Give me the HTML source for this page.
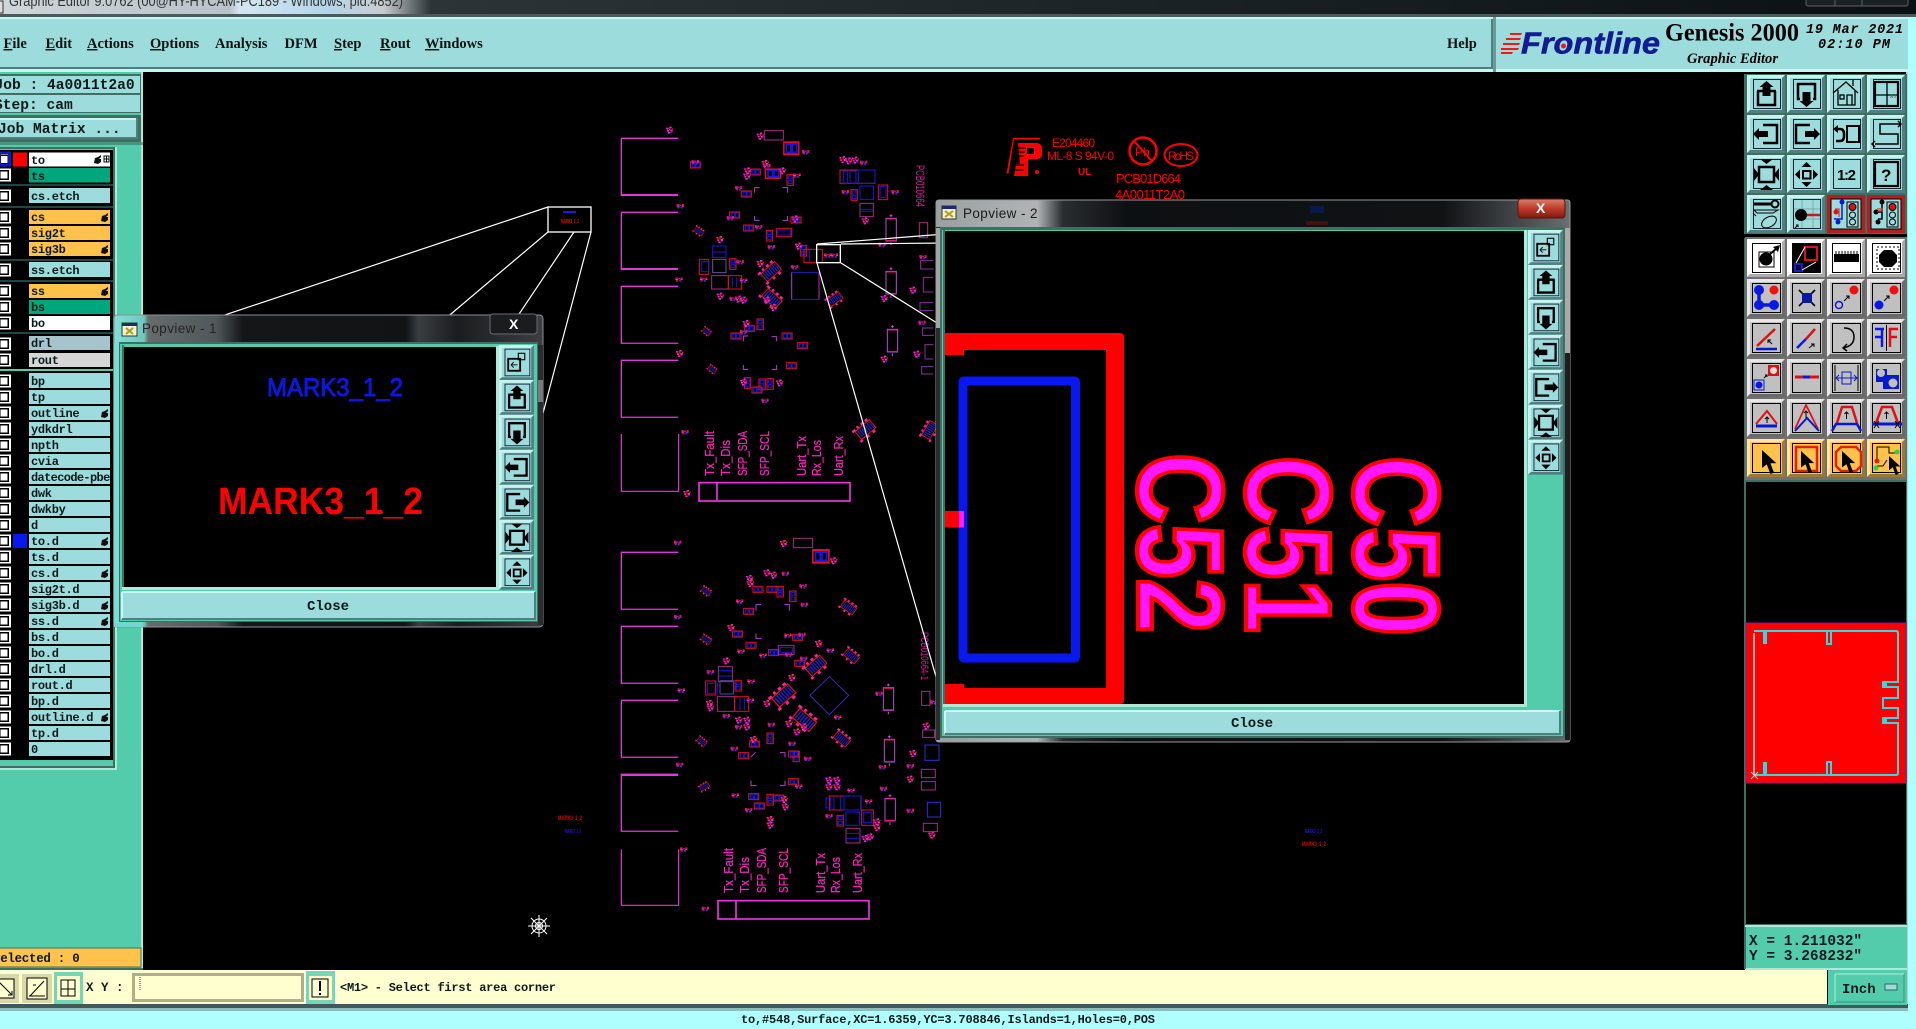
<!DOCTYPE html>
<html><head><meta charset="utf-8"><title>Graphic Editor</title>
<style>
html,body{margin:0;padding:0;background:#000;width:1916px;height:1029px;overflow:hidden}
svg{display:block;position:absolute;left:0;top:0}
text{white-space:pre}
.m{font:bold 14.5px "Liberation Serif",serif;fill:#0a1212}
.l{font:bold 12px "Liberation Mono",monospace;fill:#0a1a1a;letter-spacing:-.3px}
.j{font:bold 14.6px "Liberation Mono",monospace;fill:#0a1a1a}
.s{font:bold 12px "Liberation Mono",monospace;fill:#0a1a1a}
.t{font:13.5px "Liberation Sans",sans-serif;fill:#222;letter-spacing:.4px}
.c{font:bold 14px "Liberation Mono",monospace;fill:#0a1a1a;text-anchor:middle}
.p{font:13px "Liberation Sans",sans-serif;fill:#ff20c0;stroke:#ff20c0;stroke-width:.25}
.r{font:12px "Liberation Sans",sans-serif;fill:#f00}
</style></head><body>
<svg width="1916" height="1029" viewBox="0 0 1916 1029" xmlns="http://www.w3.org/2000/svg">
<defs>
<linearGradient id="gt" x1="0" x2="1" y1="0" y2="0">
<stop offset="0" stop-color="#cfd6da"/><stop offset=".12" stop-color="#b8c2c8"/><stop offset=".125" stop-color="#d5e6f2"/><stop offset=".17" stop-color="#b5d5ea"/><stop offset=".2" stop-color="#c8cdd0"/><stop offset=".225" stop-color="#2c3438"/><stop offset="1" stop-color="#0a1014"/>
</linearGradient>
<linearGradient id="g1" x1="114" x2="543" y1="0" y2="0" gradientUnits="userSpaceOnUse">
<stop offset="0" stop-color="#7fe0d8"/><stop offset=".07" stop-color="#70c8c0"/><stop offset=".08" stop-color="#666c6c"/><stop offset=".24" stop-color="#50575a"/><stop offset=".3" stop-color="#141618"/><stop offset=".68" stop-color="#111315"/><stop offset=".71" stop-color="#3a3e40"/><stop offset=".8" stop-color="#1a1c1e"/><stop offset="1" stop-color="#3c3e40"/>
</linearGradient>
<linearGradient id="g2" x1="936" x2="1570" y1="0" y2="0" gradientUnits="userSpaceOnUse">
<stop offset="0" stop-color="#9aa0a0"/><stop offset=".16" stop-color="#b0b4b4"/><stop offset=".2" stop-color="#2a2d2f"/><stop offset=".3" stop-color="#0d1012"/><stop offset=".8" stop-color="#101214"/><stop offset="1" stop-color="#6a6e70"/>
</linearGradient>
<linearGradient id="gr" x1="0" x2="0" y1="0" y2="1"><stop offset="0" stop-color="#d88070"/><stop offset=".5" stop-color="#c03a28"/><stop offset="1" stop-color="#7a1c10"/></linearGradient>

<g id="ck"><rect x="-3" y=".5" width="14" height="13" fill="#fff"/><rect x="-1" y="2" width="10" height="10" fill="#000"/><rect x=".5" y="3.500" width="7" height="7" fill="#fff"/></g>
<path id="hd" fill="#111" d="M0 8l1-5 3-1 3-2 0 2-2 2 2 0 0 3-3 2z"/>

<g id="bt"><rect width="38" height="38" fill="#9ddcdc"/><path d="M0 0h38l-3 3H3v32l-3 3z" fill="#c8f4f0"/><path d="M38 38H0l3-3h32V3l3-3z" fill="#4f8080"/><rect x="6.500" y="4.500" width="27" height="29" fill="none" stroke="#123" stroke-width="1"/></g>
<g id="bw"><rect width="38" height="38" fill="#fff"/><path d="M38 38H0l3-3h32V3l3-3z" fill="#aaa"/><rect x="5.500" y="4.500" width="28" height="29" fill="none" stroke="#000" stroke-width="1"/></g>
<g id="bg"><rect width="38" height="38" fill="#c0c0c0"/><path d="M0 0h38l-3 3H3v32l-3 3z" fill="#e8e8e8"/><path d="M38 38H0l3-3h32V3l3-3z" fill="#6a6a6a"/><rect x="5.500" y="4.500" width="28" height="29" fill="none" stroke="#000" stroke-width="1"/></g>
<g id="bo"><rect width="38" height="38" fill="#ffc34c"/><path d="M0 0h38l-3 3H3v32l-3 3z" fill="#ffe6a8"/><path d="M38 38H0l3-3h32V3l3-3z" fill="#9c7a30"/><rect x="5.500" y="4.500" width="28" height="29" fill="none" stroke="#000" stroke-width="1"/></g>
<g id="br"><rect width="38" height="38" fill="#b02020"/><rect x="4" y="4" width="30" height="30" fill="#9ddcdc" stroke="#000"/></g>

<g id="up"><path d="M11 16v14h17V16" fill="none" stroke="#000" stroke-width="2.500"/><path d="M10 16h6m7 0h6" stroke="#000" stroke-width="2.500"/><path d="M19.500 6l7 6h-3v9h-8v-9h-3z" fill="#000"/></g>
<g id="dn"><path d="M13 24H11V9h17v15h-2" fill="none" stroke="#000" stroke-width="2.500"/><path d="M19.500 32l7-6h-3v-9h-8v9h-3z" fill="#000"/></g>
<g id="lf"><path d="M16 10h14v18H16" fill="none" stroke="#000" stroke-width="2.500"/><path d="M6 19l6-6v3h9v6h-9v3z" fill="#000"/></g>
<g id="rg"><path d="M23 10H9v18h14" fill="none" stroke="#000" stroke-width="2.500"/><path d="M33 19l-6-6v3h-9v6h9v3z" fill="#000"/></g>
<g id="fi"><rect x="12" y="12" width="15" height="15" fill="none" stroke="#000" stroke-width="2.500"/><path d="M13 4h13l-6.500 5zM13 35h13l-6.500-5zM7 13v13l5-6.500zM32 13v13l-5-6.500z" fill="#000"/></g>
<g id="fo"><rect x="16" y="16" width="7.500" height="7.500" fill="none" stroke="#000" stroke-width="2"/><path d="M19.500 7l5 5h-10zM19.500 32l5-5h-10zM8 19.500l5-5v10zM31 19.500l-5-5v10z" fill="#000"/></g>
<g id="pp"><rect x="10" y="15" width="13" height="13" fill="none" stroke="#000" stroke-width="2"/><rect x="21" y="9" width="7" height="7" fill="none" stroke="#000" stroke-width="1.200"/><path d="M13 21.500h7M13 21.500l3-3M13 21.500l3 3" stroke="#000" fill="none"/></g>
<path id="ar" d="M0 0v15l4-3 3 8 3-1-3-8h5z" fill="#000"/>

<g id="c1"><rect x="1" y="1" width="30" height="18" fill="none" stroke="#e01020" stroke-width="3"/><rect x="6" y="4" width="9" height="12" fill="none" stroke="#1818e0" stroke-width="3"/><rect x="18" y="4" width="9" height="12" fill="none" stroke="#1818e0" stroke-width="3"/></g>
<g id="c2"><rect x="1" y="1" width="19" height="32" fill="none" stroke="#e01020" stroke-width="3"/><rect x="5" y="5" width="11" height="9" fill="none" stroke="#1818e0" stroke-width="3"/><rect x="5" y="19" width="11" height="9" fill="none" stroke="#1818e0" stroke-width="3"/></g>
<g id="s1"><path d="M0 3h8v4H0zM10 0h7v5h-7zM3 10h6v5H3zM13 9h7v6h-7zM6 16h7v5H6z" fill="#ff20b0"/><path d="M2 7h4v3H2zM9 5h4v5H9zM18 5h4v4h-4z" fill="#e01020"/><path d="M5 3h5v3H5zM14 15h5v4h-5z" fill="#2020e0"/></g>
<g id="s2"><path d="M0 0h6v5H0zM8 2h6v4H8zM16 0h6v5h-6zM2 8h6v5H2zM12 8h6v5h-6z" fill="#e01030"/><path d="M6 0h3v13H6zM14 6h4v8h-4z" fill="#2a20e0"/><path d="M0 5h8v3H0zM16 5h6v3h-6z" fill="#ff20e0"/></g>
<g id="d1"><rect x="0" y="0" width="62" height="34" fill="none" stroke="#e01020" stroke-width="3.500"/><path d="M8 4v26M16 4v26M24 4v26M32 4v26M40 4v26M48 4v26M56 4v26" stroke="#2020d0" stroke-width="4"/><path d="M-8-8h12v8H-8zM12-10h8v8h-8zM30-10h10v8H30zM48-10h10v8H48zM-8 34h10v8H-8zM20 36h9v8h-9zM44 36h10v8H44z" fill="#ff20a0"/></g>
<g id="vc"><rect x="0" y="0" width="31" height="68" fill="none" stroke="#b050d0" stroke-width="3"/><path d="M15 -12v8M11 -8h8M15 72v8" stroke="#e040e0" stroke-width="3"/><path d="M0 2h31M0 66h31" stroke="#e01060" stroke-width="3"/></g>
<g id="cn" fill="none" stroke="#e236dc" stroke-width="1.300"><path d="M56 0H0v56h56"/></g>
</defs>

<rect width="1916" height="1029" fill="#000"/>

<!-- title bar -->
<rect width="1916" height="15" fill="url(#gt)"/>
<text x="9" y="6" textLength="394" lengthAdjust="spacingAndGlyphs" style="font:15px 'Liberation Sans',sans-serif;fill:#333">Graphic Editor 9.0762 (00@HY-HYCAM-PC189 - Windows, pid:4852)</text>
<rect x="-3" y="1" width="6" height="12" fill="#ddd" stroke="#333"/>
<rect x="1806" y="-2" width="102" height="8" rx="2" fill="#1a2024" stroke="#5a6468"/>
<path d="M1835 0v6M1862 0v6" stroke="#5a6468"/>
<rect y="14" width="1916" height="3" fill="#4c5a5c"/>

<!-- right strip -->
<rect x="1908" y="17" width="8" height="1012" fill="#b0ffff"/>
<rect x="1906" y="17" width="2" height="990" fill="#a8d8d0"/>

<!-- menu bar -->
<rect y="17" width="1493" height="53" fill="#9ddcdc"/>
<rect y="17" width="1493" height="2" fill="#c6f6f2"/>
<rect y="67" width="1493" height="2" fill="#4f8080"/>
<rect y="69" width="1496" height="3" fill="#c6f6f2"/>
<rect x="1491" y="19" width="2" height="50" fill="#4f8080"/>
<rect x="1493" y="17" width="3" height="55" fill="#6a9a9a"/>
<rect x="1496" y="17" width="412" height="55" fill="#9ddcdc"/>
<rect x="1496" y="17" width="412" height="2" fill="#c6f6f2"/>
<rect x="1496" y="69" width="412" height="3" fill="#c6f6f2"/>
<g class="mm">
<text class="m" x="3.500" y="48"><tspan text-decoration="underline">F</tspan>ile</text>
<text class="m" x="45.500" y="48"><tspan text-decoration="underline">E</tspan>dit</text>
<text class="m" x="87" y="48"><tspan text-decoration="underline">A</tspan>ctions</text>
<text class="m" x="150" y="48"><tspan text-decoration="underline">O</tspan>ptions</text>
<text class="m" x="215" y="48">Analysis</text>
<text class="m" x="284.500" y="48">DFM</text>
<text class="m" x="334" y="48"><tspan text-decoration="underline">S</tspan>tep</text>
<text class="m" x="380" y="48"><tspan text-decoration="underline">R</tspan>out</text>
<text class="m" x="425" y="48"><tspan text-decoration="underline">W</tspan>indows</text>
<text class="m" x="1447" y="48">Help</text>
</g>
<!-- logo -->
<path d="M1510 33h12l-1 2h-11zM1506 38h15l-1 2h-14zM1503 43h17l-1 2h-16zM1501 48h18l-1 2h-17zM1501 52h12l-1 2h-11z" fill="#f01818"/>
<text x="1521" y="53.500" textLength="139" lengthAdjust="spacingAndGlyphs" style="font:italic bold 31px 'Liberation Sans',sans-serif;fill:#101c90;stroke:#101c90;stroke-width:.6">Frontline</text>
<circle cx="1563.500" cy="46" r="2.500" fill="#f01818"/>
<text x="1665" y="40.500" textLength="134" lengthAdjust="spacingAndGlyphs" style="font:bold 25px 'Liberation Serif',serif;fill:#000">Genesis 2000</text>
<text x="1687" y="63" textLength="91" lengthAdjust="spacingAndGlyphs" style="font:italic bold 15px 'Liberation Serif',serif;fill:#000">Graphic Editor</text>
<text x="1806" y="33" textLength="97" style="font:italic bold 13.500px 'Liberation Mono',monospace;fill:#000">19 Mar 2021</text>
<text x="1818" y="48" textLength="72" style="font:italic bold 13.500px 'Liberation Mono',monospace;fill:#000">02:10 PM</text>

<!-- left panel -->
<rect y="72" width="143" height="898" fill="#52ccab"/>
<rect x="141" y="72" width="2" height="898" fill="#b0e8d8"/>
<rect y="74" width="141" height="20" fill="#3f6f62"/>
<rect y="76" width="140" height="17" fill="#9ddcdc"/>
<text class="j" x="-5.500" y="89">Job : 4a0011t2a0</text>
<rect y="94" width="141" height="19" fill="#3f6f62"/>
<rect y="95" width="140" height="17" fill="#9ddcdc"/>
<text class="j" x="-6" y="109">Step: cam</text>
<rect y="115" width="141" height="27" fill="#3f6f62"/>
<rect y="118" width="138" height="21" fill="#9ddcdc"/>
<rect y="118" width="138" height="2" fill="#c6f6f2"/>
<rect x="136" y="118" width="2" height="21" fill="#4f8080"/>
<rect y="137" width="138" height="2" fill="#4f8080"/>
<text class="j" x="-2" y="133">Job Matrix ...</text>
<rect y="142" width="143" height="3" fill="#3f6f62" opacity=".6"/>

<!-- layer list -->
<rect y="147" width="117" height="623" fill="#b0e8d8"/>
<rect y="147" width="115" height="621" fill="#3f6f62"/>
<rect y="149" width="113" height="617" fill="#52ccab"/>
<rect y="150" width="113" height="610" fill="#000"/>
<rect y="369" width="113" height="2" fill="#52ccab"/>
<rect y="184" width="113" height="2" fill="#244"/>
<rect y="206" width="113" height="2" fill="#244"/>
<rect y="259" width="113" height="2" fill="#244"/>
<rect y="280" width="113" height="2" fill="#244"/>
<rect y="332" width="113" height="2" fill="#244"/>

<g>
<rect x="29" y="152.500" width="81" height="14" fill="#fff"/>
<rect x="29" y="168" width="81" height="14.500" fill="#00a67c"/>
<rect x="29" y="188" width="81" height="15" fill="#9ddcdc"/>
<rect x="29" y="210" width="81" height="14" fill="#ffc34c"/>
<rect x="29" y="226" width="81" height="14" fill="#ffc34c"/>
<rect x="29" y="242" width="81" height="14" fill="#ffc34c"/>
<rect x="29" y="262" width="81" height="15" fill="#9ddcdc"/>
<rect x="29" y="284" width="81" height="14" fill="#ffc34c"/>
<rect x="29" y="300" width="81" height="14" fill="#00a67c"/>
<rect x="29" y="316" width="81" height="14" fill="#fff"/>
<rect x="29" y="336" width="81" height="14" fill="#a6c4cc"/>
<rect x="29" y="353" width="81" height="14" fill="#d6d6d6"/>
<rect x="29" y="373" width="81" height="15" fill="#9ddcdc"/>
<rect x="29" y="390" width="81" height="14" fill="#9ddcdc"/>
<rect x="29" y="406" width="81" height="14" fill="#9ddcdc"/>
<rect x="29" y="422" width="81" height="14" fill="#9ddcdc"/>
<rect x="29" y="438" width="81" height="14" fill="#9ddcdc"/>
<rect x="29" y="454" width="81" height="14" fill="#9ddcdc"/>
<rect x="29" y="470" width="81" height="14" fill="#9ddcdc"/>
<rect x="29" y="486" width="81" height="14" fill="#9ddcdc"/>
<rect x="29" y="502" width="81" height="14" fill="#9ddcdc"/>
<rect x="29" y="518" width="81" height="14" fill="#9ddcdc"/>
<rect x="29" y="534" width="81" height="14" fill="#9ddcdc"/>
<rect x="29" y="550" width="81" height="14" fill="#9ddcdc"/>
<rect x="29" y="566" width="81" height="14" fill="#9ddcdc"/>
<rect x="29" y="582" width="81" height="14" fill="#9ddcdc"/>
<rect x="29" y="598" width="81" height="14" fill="#9ddcdc"/>
<rect x="29" y="614" width="81" height="14" fill="#9ddcdc"/>
<rect x="29" y="630" width="81" height="14" fill="#9ddcdc"/>
<rect x="29" y="646" width="81" height="14" fill="#9ddcdc"/>
<rect x="29" y="662" width="81" height="14" fill="#9ddcdc"/>
<rect x="29" y="678" width="81" height="14" fill="#9ddcdc"/>
<rect x="29" y="694" width="81" height="14" fill="#9ddcdc"/>
<rect x="29" y="710" width="81" height="14" fill="#9ddcdc"/>
<rect x="29" y="726" width="81" height="14" fill="#9ddcdc"/>
<rect x="29" y="742" width="81" height="14" fill="#9ddcdc"/>
<rect x="13" y="152.500" width="14" height="14" fill="#f00"/>
<rect x="13" y="534" width="14" height="14" fill="#0a18f0"/>
</g>
<g>
<use href="#ck" y="152.500"/><use href="#ck" y="168"/><use href="#ck" y="189"/><use href="#ck" y="210"/><use href="#ck" y="226"/><use href="#ck" y="242"/><use href="#ck" y="263"/><use href="#ck" y="284"/><use href="#ck" y="300"/><use href="#ck" y="316"/><use href="#ck" y="337"/><use href="#ck" y="353"/><use href="#ck" y="374"/><use href="#ck" y="390"/><use href="#ck" y="406"/><use href="#ck" y="422"/><use href="#ck" y="438"/><use href="#ck" y="454"/><use href="#ck" y="470"/><use href="#ck" y="486"/><use href="#ck" y="502"/><use href="#ck" y="518"/><use href="#ck" y="534"/><use href="#ck" y="550"/><use href="#ck" y="566"/><use href="#ck" y="582"/><use href="#ck" y="598"/><use href="#ck" y="614"/><use href="#ck" y="630"/><use href="#ck" y="646"/><use href="#ck" y="662"/><use href="#ck" y="678"/><use href="#ck" y="694"/><use href="#ck" y="710"/><use href="#ck" y="726"/><use href="#ck" y="742"/>
</g>
<path d="M-1 151.500h12v15H-1z M1 154v10h7v-10z" fill="#0a18c8" fill-rule="evenodd"/>
<g>
<text class="l" x="31" y="164">to</text>
<text class="l" x="31" y="180">ts</text>
<text class="l" x="31" y="200">cs.etch</text>
<text class="l" x="31" y="221">cs</text>
<text class="l" x="31" y="237">sig2t</text>
<text class="l" x="31" y="253">sig3b</text>
<text class="l" x="31" y="274">ss.etch</text>
<text class="l" x="31" y="295">ss</text>
<text class="l" x="31" y="311">bs</text>
<text class="l" x="31" y="327">bo</text>
<text class="l" x="31" y="347">drl</text>
<text class="l" x="31" y="364">rout</text>
<text class="l" x="31" y="385">bp</text>
<text class="l" x="31" y="401">tp</text>
<text class="l" x="31" y="417">outline</text>
<text class="l" x="31" y="433">ydkdrl</text>
<text class="l" x="31" y="449">npth</text>
<text class="l" x="31" y="465">cvia</text>
<text class="l" x="31" y="481" textLength="79">datecode-pbe</text>
<text class="l" x="31" y="497">dwk</text>
<text class="l" x="31" y="513">dwkby</text>
<text class="l" x="31" y="529">d</text>
<text class="l" x="31" y="545">to.d</text>
<text class="l" x="31" y="561">ts.d</text>
<text class="l" x="31" y="577">cs.d</text>
<text class="l" x="31" y="593">sig2t.d</text>
<text class="l" x="31" y="609">sig3b.d</text>
<text class="l" x="31" y="625">ss.d</text>
<text class="l" x="31" y="641">bs.d</text>
<text class="l" x="31" y="657">bo.d</text>
<text class="l" x="31" y="673">drl.d</text>
<text class="l" x="31" y="689">rout.d</text>
<text class="l" x="31" y="705">bp.d</text>
<text class="l" x="31" y="721">outline.d</text>
<text class="l" x="31" y="737">tp.d</text>
<text class="l" x="31" y="753">0</text>
</g>
<use href="#hd" x="94" y="155"/><rect x="104" y="156" width="5" height="6" fill="none" stroke="#111"/><path d="M106.500 156v6M104 159h5" stroke="#111"/>
<use href="#hd" x="101" y="213"/><use href="#hd" x="101" y="245"/><use href="#hd" x="101" y="287"/><use href="#hd" x="101" y="409"/><use href="#hd" x="101" y="537"/><use href="#hd" x="101" y="569"/><use href="#hd" x="101" y="601"/><use href="#hd" x="101" y="617"/><use href="#hd" x="101" y="713"/>

<!-- selected -->
<rect y="948" width="141" height="19" fill="#ffc34c"/>
<path d="M0 948h141v19H0" fill="none" stroke="#3f6f62"/>
<text class="s" x="-7" y="962" style="font-size:12.500px;letter-spacing:-.3px">Selected : 0</text>
<rect y="968" width="143" height="2" fill="#3f6f62"/>

<!-- bottom bar -->
<rect y="970" width="1827" height="35" fill="#ffffd0"/>
<rect y="1004" width="1908" height="4" fill="#3f5a58"/>
<rect y="1008" width="1908" height="3" fill="#8cbcbc"/>
<rect y="1011" width="1908" height="18" fill="#b0ffff"/>
<rect x="0" y="974" width="19" height="29" fill="#d8d8a8"/><rect x="-6" y="979" width="20" height="19" fill="#ffffd0" stroke="#000"/>
<path d="M-2 981l14 14m-4 0h4v-4" stroke="#000" fill="none"/>
<rect x="22" y="974" width="30" height="29" fill="#d8d8a8"/><rect x="27" y="978" width="20" height="21" fill="#ffffd0" stroke="#000"/>
<path d="M30 996l14-15M29 996h16M33 985h3" stroke="#000" fill="none"/>
<rect x="54" y="972" width="29" height="32" fill="#52ccab" opacity=".8"/><rect x="57" y="976" width="23" height="24" fill="#ffffd0"/><rect x="61" y="980" width="14" height="16" fill="none" stroke="#000"/>
<path d="M61 989h14M68 980v16" stroke="#000"/>
<text class="s" x="86" y="991" style="font-size:12.500px">X Y :</text>
<rect x="132" y="973" width="172" height="29" fill="#b0b084"/><rect x="135" y="976" width="166" height="23" fill="#ffffd0"/>
<path d="M140 977v14" stroke="#333" stroke-dasharray="1 1"/>
<rect x="304" y="970" width="32" height="34" fill="#fffff0"/>
<rect x="306" y="971" width="29" height="33" fill="#52ccab" opacity=".8"/><rect x="309" y="976" width="23" height="24" fill="#ffffd0"/><rect x="312" y="979" width="16" height="18" fill="none" stroke="#000"/>
<path d="M320 981v10M320 993v2" stroke="#000" stroke-width="2"/>
<text class="s" x="340" y="991" textLength="216">&lt;M1&gt; - Select first area corner</text>
<rect x="1828" y="970" width="79" height="35" fill="#52ccab"/>
<rect x="1835" y="974" width="69" height="28" fill="#52ccab" stroke="#3f8f80"/>
<path d="M1835 974h69M1835 974v28" stroke="#b0f0e0"/>
<text class="j" x="1842" y="993" style="font-size:14px">Inch</text>
<rect x="1885" y="984" width="12" height="6" fill="#9ddcdc" stroke="#2a6a5a"/>
<text class="s" x="741" y="1023" textLength="414">to,#548,Surface,XC=1.6359,YC=3.708846,Islands=1,Holes=0,POS</text>

<!-- right minimap & coords -->
<rect x="1744" y="74" width="163" height="854" fill="#3f6f62"/>
<rect x="1746" y="482" width="160" height="442" fill="#000"/>
<rect x="1746" y="623" width="160" height="160" fill="#f00" stroke="#8a1a8a"/>
<path d="M1754 633V775" stroke="#b0b0b0" stroke-width="2" fill="none"/>
<path d="M1754 631H1896q2 0 2 2V682H1883V687H1898V698H1883V708H1898V718H1883V723H1898V773q0 2-2 2H1754" fill="none" stroke="#30d8e0" stroke-width="2"/>
<path d="M1827 632v12h4v-12M1827 775v-13h4v13" fill="none" stroke="#30d8e0" stroke-width="2"/>
<rect x="1763" y="632" width="4" height="12" fill="#30d8e0"/><rect x="1763" y="762" width="4" height="13" fill="#30d8e0"/>
<rect x="1882" y="682" width="5" height="5" fill="#30d8e0"/><rect x="1882" y="718" width="5" height="5" fill="#30d8e0"/>
<path d="M1751 772l7 7m0-7l-7 7" stroke="#ddd"/>
<rect x="1745" y="926" width="162" height="43" fill="#52ccab"/>
<rect x="1745" y="925" width="162" height="2" fill="#b0e8d8"/>
<rect x="1745" y="968" width="162" height="2" fill="#b0e8d8"/>
<rect x="1744" y="927" width="2" height="42" fill="#3f6f62"/>
<text class="j" x="1749" y="945" style="font-size:14.500px">X = 1.211032"</text>
<text class="j" x="1749" y="960" style="font-size:14.500px">Y = 3.268232"</text>

<!-- toolbar group 1 -->
<g>
<use href="#bt" x="1747" y="75"/><use href="#up" x="1747" y="75"/>
<use href="#bt" x="1787" y="75"/><use href="#dn" x="1787" y="75"/>
<use href="#bt" x="1827" y="75"/>
<g transform="translate(1827 75)" fill="none" stroke="#000" stroke-width="1.300"><path d="M6 18l13-11 12 11M11 15v15h17V15"/><rect x="13" y="20" width="4" height="4"/><path d="M20 30V20h5v10M26 11V5"/></g>
<use href="#bt" x="1867" y="75"/>
<g transform="translate(1867 75)" fill="none" stroke="#000"><rect x="8" y="7" width="23" height="24" stroke-width="2.200"/><path d="M8 20h23M20 7v24" stroke-width="1.300"/></g>
<text x="1890" y="98" style="font:bold 5px 'Liberation Sans',sans-serif;fill:#555">XY</text>
<use href="#bt" x="1747" y="115"/><use href="#lf" x="1747" y="115"/>
<use href="#bt" x="1787" y="115"/><use href="#rg" x="1787" y="115"/>
<use href="#bt" x="1827" y="115"/>
<g transform="translate(1827 115)"><rect x="20" y="11" width="12" height="16" fill="none" stroke="#000" stroke-width="2"/><path d="M8 14h5q4 0 4 5v2q0 5-4 5H9" fill="none" stroke="#000" stroke-width="2.500"/><path d="M6 14l5-4v8z" fill="#000"/></g>
<use href="#bt" x="1867" y="115"/>
<path transform="translate(1867 115)" d="M34 9H13v10h18v10H8M31 6l3 3-3 3M8 26l-3 3 3 3" fill="none" stroke="#000" stroke-width="1.500"/>
<use href="#bt" x="1747" y="155"/><use href="#fi" x="1747" y="155"/>
<use href="#bt" x="1787" y="155"/><use href="#fo" x="1787" y="155"/>
<use href="#bt" x="1827" y="155"/>
<text x="1837" y="180" style="font:bold 15px 'Liberation Sans',sans-serif;fill:#000" textLength="19">1:2</text>
<use href="#bt" x="1867" y="155"/><rect x="1875" y="162" width="23" height="24" fill="none" stroke="#000" stroke-width="2.200"/>
<text x="1881" y="181" style="font:bold 17px 'Liberation Sans',sans-serif;fill:#000">?</text>
<use href="#bt" x="1747" y="195"/>
<g transform="translate(1747 195)" fill="none" stroke="#000"><path d="M7 9h18" stroke-width="3"/><circle cx="28" cy="9" r="3.500" stroke-width="2"/><path d="M7 15h24l-5 3H10zM9 21l-3-3"/><ellipse cx="22" cy="27" rx="8" ry="5" transform="rotate(-30 22 27)"/></g>
<use href="#bt" x="1787" y="195"/>
<g transform="translate(1787 195)"><path d="M7 14h26M7 24h26M15 5v28M26 5v28" stroke="#7aa8a8"/><path d="M19 20h14" stroke="#c81818" stroke-width="2.500"/><circle cx="14" cy="20" r="6" fill="#000"/><path d="M8 33l3-3m-2 0h2v2" stroke="#000" fill="none"/></g>
<use href="#br" x="1827" y="195"/>
<g transform="translate(1827 195)"><path d="M15 7v17H11m-4 0h6M15 9v1" stroke="#0a18d0" stroke-width="1.500" fill="none"/><path d="M8 14h4v8" stroke="#e01010" fill="none"/><circle cx="15" cy="7" r="2.500" fill="#0a18d0"/><circle cx="9" cy="17" r="2.500" fill="#e01010"/><circle cx="11" cy="27" r="2.500" fill="#0a18d0"/><rect x="20" y="7" width="11" height="25" fill="none" stroke="#000"/><circle cx="25.500" cy="12" r="3.500" fill="#e01010" stroke="#000"/><circle cx="25.500" cy="20" r="3" fill="none" stroke="#000"/><circle cx="25.500" cy="27" r="3" fill="none" stroke="#000"/></g>
<use href="#br" x="1867" y="195"/>
<g transform="translate(1867 195)"><path d="M15 7v17H11M9 17h6" stroke="#000" stroke-width="1.500" fill="none"/><circle cx="15" cy="7" r="2.500" fill="#000"/><circle cx="9" cy="17" r="2.500" fill="#000"/><circle cx="11" cy="27" r="2.500" fill="#000"/><path d="M11 17v-4m2 0v4m2-4v4" stroke="#e01010"/><rect x="20" y="7" width="11" height="25" fill="none" stroke="#000"/><circle cx="25.500" cy="12" r="3.500" fill="#e01010" stroke="#000"/><circle cx="25.500" cy="20" r="3" fill="none" stroke="#000"/><circle cx="25.500" cy="27" r="3" fill="none" stroke="#000"/></g>
</g>
<rect x="1744" y="234" width="163" height="4" fill="#000"/>
<rect x="1745" y="237" width="162" height="243" fill="#707070"/>

<!-- toolbar group 2 -->
<g>
<use href="#bw" x="1747" y="239"/>
<g transform="translate(1747 239)"><rect x="12" y="13" width="15" height="15" fill="none" stroke="#000"/><circle cx="19" cy="20" r="6.500" fill="#000"/><path d="M22 16l8-7" stroke="#000" stroke-width="2"/><path d="M33 6l-7 2 5 5z" fill="#000"/></g>
<use href="#bw" x="1787" y="239"/>
<g transform="translate(1787 239)"><rect x="5.500" y="4.500" width="28" height="29" fill="#000"/><rect x="18" y="8" width="12" height="13" fill="none" stroke="#e01010" stroke-width="2"/><rect x="8" y="25" width="7" height="7" fill="none" stroke="#1818e0" stroke-width="2"/><path d="M9 24l9-16M15 31l14-8" stroke="#fff"/></g>
<use href="#bw" x="1827" y="239"/>
<g transform="translate(1827 239)"><rect x="7" y="15" width="25" height="8" fill="#000"/><path d="M9 12v5M12 12v5M15 12v5M18 12v5M21 12v5M24 12v5M27 12v5M30 12v5" stroke="#000"/></g>
<use href="#bw" x="1867" y="239"/>
<g transform="translate(1867 239)"><rect x="10" y="8" width="22" height="22" fill="none" stroke="#000" stroke-dasharray="2 2"/><path d="M17 11h8l5 5v7l-5 5h-8l-5-5v-7z" fill="#000"/></g>

<use href="#bg" x="1747" y="279"/>
<g transform="translate(1747 279)"><path d="M12 11v15h15" stroke="#0a18e0" stroke-width="3.500" fill="none"/><circle cx="12" cy="11" r="5" fill="#0a18e0"/><circle cx="12" cy="26" r="5" fill="#0a18e0"/><circle cx="27" cy="26" r="5" fill="#0a18e0"/><circle cx="27" cy="11" r="4.500" fill="#f01010"/></g>
<use href="#bg" x="1787" y="279"/>
<g transform="translate(1787 279)"><path d="M12 11l16 16M28 11L12 27" stroke="#000" stroke-width="1.600"/><rect x="15" y="14" width="10" height="10" fill="#0a18a0"/></g>
<use href="#bg" x="1827" y="279"/>
<g transform="translate(1827 279)"><circle cx="12" cy="26" r="3.500" fill="none" stroke="#0a18e0" stroke-width="1.500"/><circle cx="27" cy="11" r="4.500" fill="#f01010"/><path d="M17 22l5-5m-3 0h3v3" stroke="#000" fill="none"/></g>
<use href="#bg" x="1867" y="279"/>
<g transform="translate(1867 279)"><circle cx="12" cy="26" r="4.500" fill="#0a18e0"/><circle cx="27" cy="11" r="4.500" fill="#f01010"/><path d="M17 22l5-5m-3 0h3v3" stroke="#000" fill="none"/></g>

<use href="#bg" x="1747" y="319"/>
<g transform="translate(1747 319)"><path d="M10 27l18-17" stroke="#e01010" stroke-width="2.500"/><path d="M9 30h21" stroke="#0a18d0" stroke-width="2.500"/><path d="M25 25l-4-4m0 3v-3h3" stroke="#000" fill="none"/></g>
<use href="#bg" x="1787" y="319"/>
<g transform="translate(1787 319)"><path d="M10 29l9-9" stroke="#0a18e0" stroke-width="2.500"/><path d="M19 20l9-10" stroke="#e01010" stroke-width="2.500"/><path d="M22 29l5-4m-3 0h3v3" stroke="#000" fill="none"/></g>
<use href="#bg" x="1827" y="319"/>
<path transform="translate(1827 319)" d="M17 9q10 0 10 9t-11 11m4-4l-4 4 4 3" fill="none" stroke="#000" stroke-width="1.500"/>
<use href="#bg" x="1867" y="319"/>
<g transform="translate(1867 319)" fill="none" stroke-width="2.500"><path d="M8 10h9M8 18h8M15 10v18" stroke="#0a18e0"/><path d="M31 10h-8v18M23 18h7" stroke="#e01010"/><path d="M19.500 6v26" stroke="#000" stroke-width="1"/></g>

<use href="#bg" x="1747" y="359"/>
<g transform="translate(1747 359)"><rect x="21" y="6" width="11" height="11" fill="#e01010"/><circle cx="26.500" cy="11.500" r="3.500" fill="#ddd"/><rect x="7" y="21" width="10" height="10" fill="none" stroke="#0a18e0"/><circle cx="12" cy="26" r="3.500" fill="#0a18e0"/><path d="M17 19l3-3m-2 0h2v2" stroke="#000" fill="none"/></g>
<use href="#bg" x="1787" y="359"/>
<g transform="translate(1787 359)"><path d="M8 18h24" stroke="#e01010" stroke-width="3"/><path d="M16 18h7" stroke="#0a18e0" stroke-width="3"/></g>
<use href="#bg" x="1827" y="359"/>
<g transform="translate(1827 359)" fill="none" stroke="#0a18d0"><path d="M8 6v26M31 6v26" stroke="#000"/><rect x="15" y="13" width="9" height="12"/><path d="M9 19h21M12 16l-3 3 3 3M27 16l3 3-3 3"/></g>
<use href="#bg" x="1867" y="359"/>
<g transform="translate(1867 359)"><path d="M9 10h11v6h12v14H16v-7H9z" fill="#0a18d0"/><circle cx="14" cy="14" r="4" fill="#c0c0c0"/><circle cx="26" cy="24" r="4.500" fill="#c0c0c0"/></g>

<use href="#bg" x="1747" y="399"/>
<g transform="translate(1747 399)"><path d="M9 25l11-13 10 13" fill="none" stroke="#e01010" stroke-width="2"/><path d="M9 27h21" stroke="#0a18d0" stroke-width="3"/><path d="M20 24v-6m-2 2l2-2 2 2" stroke="#000" fill="none"/></g>
<use href="#bg" x="1787" y="399"/>
<g transform="translate(1787 399)"><path d="M8 30L19 6l12 24" fill="none" stroke="#e01010" stroke-width="1.700"/><path d="M8 32l12-13 12 13" fill="none" stroke="#0a18d0" stroke-width="2"/><path d="M19 19v-7m-2 2l2-2 2 2" stroke="#000" fill="none"/></g>
<use href="#bg" x="1827" y="399"/>
<g transform="translate(1827 399)"><path d="M10 24l5-16h10l5 16" fill="none" stroke="#e01010" stroke-width="2.500"/><path d="M5 32l4-7h21l4 7" fill="none" stroke="#0a18d0" stroke-width="2.500"/><path d="M19.500 20v-7m-2 2l2-2 2 2" stroke="#000" fill="none"/></g>
<use href="#bg" x="1867" y="399"/>
<g transform="translate(1867 399)"><path d="M9 24l6-16h10l6 16" fill="none" stroke="#e01010" stroke-width="2.500"/><path d="M5 25h30" stroke="#0a18d0" stroke-width="3"/><path d="M7 22l5 7m0-7l-5 7M28 22l5 7m0-7l-5 7" stroke="#000"/><path d="M19.500 20v-7m-2 2l2-2 2 2" stroke="#000" fill="none"/></g>

<use href="#bo" x="1747" y="439"/><use href="#ar" transform="translate(1762 450) scale(1.200)"/>
<use href="#bo" x="1787" y="439"/>
<rect x="1796" y="447" width="21" height="24" fill="none" stroke="#e02010" stroke-width="2.500"/><use href="#ar" transform="translate(1801 451) scale(1.100)"/>
<use href="#bo" x="1827" y="439"/>
<path d="M1841 447h15l5 5v14l-5 5h-15l-5-5v-14z" fill="none" stroke="#e02010" stroke-width="2.500"/><use href="#ar" transform="translate(1842 451) scale(1.100)"/>
<use href="#bo" x="1867" y="439"/>
<g transform="translate(1867 439)"><path d="M10 22V8h12v6h8M10 27h6l4-6" fill="none" stroke="#000"/><circle cx="10" cy="22" r="2.500" fill="#e02010"/><circle cx="30" cy="13" r="2.500" fill="#30d040"/><circle cx="9" cy="29" r="2.500" fill="#30d040"/><use href="#ar" transform="translate(22 17) scale(.95)"/></g>
</g>

<!-- PCB marks -->
<g>
<path d="M1013 138h27v1.500h-26l-5.500 34h-2z" fill="#f00"/>
<path d="M1018 143h18q6 0 6 6v5q0 5-6 5h-8v17h-14l2-12h4z" fill="#f00"/>
<path d="M1014 148h12M1013 152h12M1012 156h12M1010 165h14M1010 170h14" stroke="#000" stroke-width="1.300"/>
<rect x="1027" y="148" width="7" height="6" fill="#000"/>
<text class="r" x="1052" y="147" textLength="43">E204460</text>
<text class="r" x="1047" y="160" textLength="67">ML-8 S 94V-0</text>
<circle cx="1037" cy="172" r="2" fill="#f00"/>
<text x="1078" y="175" style="font:bold 10px 'Liberation Sans',sans-serif;fill:#f00">UL</text>
<circle cx="1143" cy="151" r="13.500" fill="none" stroke="#f00" stroke-width="2.500"/><path d="M1134 141l18 20" stroke="#f00" stroke-width="2"/>
<text class="r" x="1135" y="156">Pb</text>
<ellipse cx="1181" cy="155" rx="16.500" ry="11" fill="none" stroke="#f00" stroke-width="2"/>
<text class="r" x="1168" y="160" textLength="26">RoHS</text>
<text class="r" x="1116" y="183" textLength="65" style="font-size:13px">PCB01D664</text>
<text class="r" x="1115" y="199" textLength="70" style="font-size:13px">4A0011T2A0</text>
</g>

<!-- top board -->
<g transform="translate(600 110) scale(.33333)" fill="none">
<use href="#cn" transform="translate(64 85) scale(3.050)"/>
<path d="M64 255h170" stroke="#e236dc" stroke-width="6"/>
<use href="#cn" transform="translate(64 307) scale(3.050)"/>
<path d="M64 477h170" stroke="#e236dc" stroke-width="6"/>
<use href="#cn" transform="translate(64 529) scale(3.050)"/>
<use href="#cn" transform="translate(64 751) scale(3.050)"/>
<path d="M64 972v172h172V972" stroke="#e236dc" stroke-width="3.500"/>
<rect x="297" y="1118" width="453" height="55" stroke="#ee30e0" stroke-width="5"/><path d="M351 1118v55" stroke="#ee30e0" stroke-width="5"/>
<rect x="493" y="62" width="57" height="28" stroke="#a03080" stroke-width="3"/>
<use href="#c1" transform="translate(550 95) scale(1.500 2)"/>
<use href="#s1" x="198" y="50"/><use href="#s1" x="470" y="68"/><use href="#s2" x="606" y="120"/>
<use href="#c1" transform="translate(270 155)"/><use href="#s2" x="275" y="150"/>
<use href="#c1" transform="translate(450 176)"/><use href="#c1" transform="translate(495 176) scale(1.500 1.500)"/><use href="#s1" x="432" y="172"/><use href="#s1" x="485" y="150"/><use href="#s1" x="536" y="172"/><use href="#s1" x="430" y="188"/><use href="#s2" x="490" y="162"/>
<use href="#c2" x="560" y="193"/><use href="#s2" x="580" y="190"/><use href="#s2" x="405" y="228"/><use href="#c1" transform="translate(423 242)"/>
<path d="M464 248v-15h15M548 233h15v15M464 318v13h15M548 331h15v-13M430 678v16M430 678h14M515 680h15v14M430 765v13h14M515 778h15v-13" stroke="#b040d0" stroke-width="3"/>
<use href="#c1" transform="translate(388 305)"/><use href="#s2" x="380" y="318"/><use href="#c1" transform="translate(572 320)"/><use href="#s1" x="575" y="316"/><use href="#c1" transform="translate(430 344)"/><use href="#s2" x="465" y="345"/>
<use href="#c2" x="498" y="360"/><rect x="530" y="355" width="45" height="25" stroke="#e01020" stroke-width="3"/><rect x="534" y="360" width="38" height="15" stroke="#1818e0" stroke-width="3"/><use href="#s2" x="503" y="405"/>
<g transform="translate(720 180)"><rect width="105" height="40" stroke="#e01020" stroke-width="3"/><rect x="10" y="3" width="12" height="36" stroke="#1818e0" stroke-width="3"/><rect x="30" y="3" width="18" height="36" stroke="#1818e0" stroke-width="3"/><rect x="55" y="0" width="50" height="40" stroke="#1818e0" stroke-width="3"/></g>
<use href="#s1" x="718" y="138"/><use href="#s1" x="735" y="142"/><use href="#s1" x="755" y="140"/><use href="#s2" x="780" y="152"/>
<use href="#c2" x="752" y="238"/><rect x="780" y="228" width="40" height="40" stroke="#1818e0" stroke-width="3"/><rect x="835" y="225" width="28" height="44" stroke="#e01020" stroke-width="3"/><rect x="840" y="230" width="18" height="32" stroke="#1818e0" stroke-width="3"/>
<use href="#s2" x="725" y="240"/><use href="#s2" x="874" y="240"/>
<rect x="780" y="280" width="40" height="40" stroke="#a03080" stroke-width="3"/><path d="M780 298h40M780 304h40" stroke="#1818e0" stroke-width="3"/><use href="#s1" x="785" y="322"/>
<use href="#vc" x="858" y="325"/><use href="#vc" x="858" y="484"/><use href="#vc" x="862" y="658"/>
<rect x="958" y="338" width="25" height="45" stroke="#a03080" stroke-width="3"/>
<g transform="translate(290 350) rotate(35) scale(.45)"><use href="#d1"/></g>
<use href="#s1" x="349" y="378"/>
<rect x="338" y="408" width="40" height="34" stroke="#1818e0" stroke-width="3"/><path d="M338 426h40" stroke="#1818e0" stroke-width="3"/>
<rect x="338" y="448" width="40" height="40" stroke="#7050a0" stroke-width="3"/><rect x="298" y="448" width="28" height="45" stroke="#e01020" stroke-width="3"/><rect x="305" y="455" width="22" height="30" stroke="#1818e0" stroke-width="3"/><use href="#c2" x="388" y="445"/><use href="#s2" x="410" y="450"/>
<rect x="335" y="497" width="50" height="40" stroke="#a03080" stroke-width="3"/><rect x="385" y="497" width="40" height="40" stroke="#e01020" stroke-width="3"/><path d="M397 503v28M410 503v28" stroke="#1818e0" stroke-width="3"/><use href="#s2" x="300" y="502"/><use href="#s2" x="226" y="502"/><use href="#s2" x="420" y="505"/>
<use href="#s1" x="350" y="548"/><use href="#s1" x="405" y="557"/><use href="#s2" x="388" y="560"/><use href="#s1" x="420" y="560"/>
<g transform="translate(482 492) rotate(-42)"><use href="#d1" transform="scale(.9)"/></g>
<g transform="translate(505 535) rotate(42)"><use href="#d1" transform="scale(.9)"/></g>
<use href="#s1" x="470" y="450"/><use href="#s1" x="490" y="560"/><use href="#s1" x="510" y="582"/>
<rect x="575" y="488" width="82" height="80" stroke="#2020c0" stroke-width="3"/><path d="M575 488v80M657 488v80" stroke="#b030b0" stroke-width="3"/>
<use href="#s2" x="573" y="465"/>
<use href="#c2" x="600" y="405"/><rect x="612" y="418" width="55" height="40" stroke="#e01020" stroke-width="3"/><path d="M628 420v36M650 420v36" stroke="#1818e0" stroke-width="3"/><use href="#s1" x="585" y="398"/><use href="#s2" x="672" y="430"/><use href="#s2" x="692" y="430"/>
<rect x="650" y="404" width="71" height="54" stroke="#fff" stroke-width="4"/>
<g transform="translate(680 570) rotate(-35) scale(.7)"><use href="#d1"/></g>
<use href="#s2" x="230" y="282"/><use href="#s1" x="228" y="720"/>
<g transform="translate(315 652) rotate(40) scale(.4)"><use href="#d1"/></g>
<g transform="translate(332 765) rotate(40) scale(.4)"><use href="#d1"/></g>
<use href="#c1" transform="translate(432 645)"/><use href="#s1" x="428" y="630"/><use href="#c2" x="470" y="626"/><use href="#c1" transform="translate(392 668)"/><use href="#s2" x="420" y="660"/>
<use href="#c1" transform="translate(545 668)"/><use href="#c1" transform="translate(592 697)"/><use href="#c1" transform="translate(558 757)"/>
<use href="#c2" x="432" y="802"/><use href="#s1" x="420" y="806"/><use href="#c2" x="476" y="806"/><use href="#c2" x="500" y="805"/><use href="#s1" x="528" y="808"/><use href="#c1" transform="translate(455 830)"/><use href="#s2" x="484" y="866"/>
<g transform="translate(765 965) rotate(-40) scale(.9)"><use href="#d1"/></g>
<g transform="translate(965 975) rotate(-60) scale(.8)"><use href="#d1"/></g>
<use href="#s1" x="250" y="1140"/><use href="#s2" x="244" y="960"/>
<use href="#s1" x="928" y="530"/><use href="#s1" x="842" y="555"/><use href="#s1" x="940" y="722"/><use href="#s1" x="842" y="737"/><use href="#s2" x="835" y="398"/>
<path d="M1000 452H962v25h40M1000 502H970v44h30M1000 578H960v24h40M1000 654H968v22h34M1000 704H975v43h25M1000 770H965v22h35" stroke="#8a30a0" stroke-width="3"/>
<use href="#s2" x="958" y="435"/><use href="#s2" x="955" y="632"/>
</g>
<g class="tt">
<text class="p" transform="translate(714 476) rotate(-90)" textLength="45" lengthAdjust="spacingAndGlyphs">Tx_Fault</text>
<text class="p" transform="translate(730 476) rotate(-90)" textLength="36" lengthAdjust="spacingAndGlyphs">Tx_Dis</text>
<text class="p" transform="translate(747 476) rotate(-90)" textLength="45" lengthAdjust="spacingAndGlyphs">SFP_SDA</text>
<text class="p" transform="translate(769 476) rotate(-90)" textLength="45" lengthAdjust="spacingAndGlyphs">SFP_SCL</text>
<text class="p" transform="translate(806 476) rotate(-90)" textLength="40" lengthAdjust="spacingAndGlyphs">Uart_Tx</text>
<text class="p" transform="translate(821 476) rotate(-90)" textLength="36" lengthAdjust="spacingAndGlyphs">Rx_Los</text>
<text class="p" transform="translate(843 476) rotate(-90)" textLength="40" lengthAdjust="spacingAndGlyphs">Uart_Rx</text>
<text class="p" transform="translate(733 893) rotate(-90)" textLength="45" lengthAdjust="spacingAndGlyphs">Tx_Fault</text>
<text class="p" transform="translate(749 893) rotate(-90)" textLength="36" lengthAdjust="spacingAndGlyphs">Tx_Dis</text>
<text class="p" transform="translate(766 893) rotate(-90)" textLength="45" lengthAdjust="spacingAndGlyphs">SFP_SDA</text>
<text class="p" transform="translate(788 893) rotate(-90)" textLength="45" lengthAdjust="spacingAndGlyphs">SFP_SCL</text>
<text class="p" transform="translate(825 893) rotate(-90)" textLength="40" lengthAdjust="spacingAndGlyphs">Uart_Tx</text>
<text class="p" transform="translate(840 893) rotate(-90)" textLength="36" lengthAdjust="spacingAndGlyphs">Rx_Los</text>
<text class="p" transform="translate(862 893) rotate(-90)" textLength="40" lengthAdjust="spacingAndGlyphs">Uart_Rx</text>
<text transform="translate(916 165) rotate(90)" textLength="42" lengthAdjust="spacingAndGlyphs" style="font:12px 'Liberation Sans',sans-serif;fill:#e0189a">PCB010664</text>
<text transform="translate(921 632) rotate(90)" textLength="48" lengthAdjust="spacingAndGlyphs" style="font:11px 'Liberation Sans',sans-serif;fill:#e0189a">PCB010664-1</text>
</g>

<!-- bottom board -->
<g transform="translate(600 520) scale(.33333)" fill="none">
<use href="#cn" transform="translate(64 97) scale(3.050)"/>
<use href="#cn" transform="translate(64 319) scale(3.050)"/>
<use href="#cn" transform="translate(64 541) scale(3.050)"/>
<use href="#cn" transform="translate(64 763) scale(3.050)"/>
<path d="M64 765h170" stroke="#e236dc" stroke-width="6"/>
<path d="M64 988v168h172V988" stroke="#e236dc" stroke-width="3.500"/>
<rect x="354" y="1142" width="453" height="55" stroke="#ee30e0" stroke-width="5"/><path d="M408 1142v55" stroke="#ee30e0" stroke-width="5"/>
<use href="#s2" x="222" y="62"/><use href="#s2" x="222" y="285"/><use href="#s2" x="233" y="505"/><use href="#s2" x="228" y="728"/><use href="#s2" x="240" y="982"/>
<rect x="580" y="55" width="58" height="28" stroke="#a03080" stroke-width="3"/><use href="#s1" x="540" y="60"/>
<use href="#c1" transform="translate(637 88) scale(1.600 2.100)"/><use href="#s1" x="690" y="112"/>
<g transform="translate(312 200) rotate(35) scale(.45)"><use href="#d1"/></g>
<g transform="translate(312 345) rotate(35) scale(.45)"><use href="#d1"/></g>
<g transform="translate(300 650) rotate(40) scale(.45)"><use href="#d1"/></g>
<g transform="translate(298 800) rotate(-30) scale(.45)"><use href="#d1"/></g>
<use href="#s1" x="438" y="165"/><use href="#s1" x="490" y="148"/><use href="#s1" x="510" y="155"/><use href="#s2" x="545" y="155"/><use href="#s2" x="598" y="192"/><use href="#s2" x="602" y="248"/><use href="#s1" x="440" y="180"/>
<use href="#c1" transform="translate(458 198)"/><use href="#c1" transform="translate(500 198)"/><use href="#c2" x="530" y="198"/><use href="#c2" x="568" y="212"/>
<use href="#s2" x="408" y="238"/><use href="#c1" transform="translate(430 264)"/>
<path d="M468 272v-18h15M553 254h15v18M468 340v15h17M555 355v-15M453 782v15h17M540 797h15v-15M540 698h15v14M452 712l15-15" stroke="#b040d0" stroke-width="3"/>
<use href="#s1" x="382" y="312"/><use href="#c1" transform="translate(397 332)"/><use href="#s2" x="412" y="388"/><use href="#c1" transform="translate(437 366)"/>
<use href="#s2" x="478" y="400"/><use href="#c1" transform="translate(505 388)"/><rect x="535" y="376" width="47" height="28" stroke="#a03080" stroke-width="3"/><rect x="540" y="382" width="37" height="16" stroke="#1818e0" stroke-width="3"/><use href="#s2" x="555" y="398"/><use href="#c1" transform="translate(583 420)"/><use href="#s2" x="600" y="410"/>
<use href="#c1" transform="translate(577 342)"/><use href="#s2" x="553" y="340"/><use href="#s2" x="595" y="338"/>
<g transform="translate(615 445) rotate(-42) scale(.95)"><use href="#d1"/></g>
<use href="#s1" x="645" y="360"/><use href="#s2" x="680" y="385"/>
<g transform="translate(745 385) rotate(40) scale(.7)"><use href="#d1"/></g>
<g transform="translate(735 240) rotate(35) scale(.7)"><use href="#d1"/></g>
<path d="M688 470l58 56-58 58-58-58z" stroke="#4030d0" stroke-width="2.500"/>
<use href="#s2" x="702" y="586"/>
<g transform="translate(515 535) rotate(-42) scale(1.050)"><use href="#d1"/></g>
<use href="#s1" x="490" y="540"/><use href="#s1" x="565" y="462"/>
<g transform="translate(600 565) rotate(40) scale(1.050)"><use href="#d1"/></g>
<use href="#s1" x="556" y="600"/><use href="#s1" x="580" y="625"/><use href="#s1" x="600" y="610"/>
<g transform="translate(716 632) rotate(40) scale(.75)"><use href="#d1"/></g>
<rect x="355" y="440" width="42" height="45" stroke="#a03080" stroke-width="3"/><path d="M357 452h38M357 468h38" stroke="#1818e0" stroke-width="3"/><use href="#s1" x="368" y="412"/><use href="#s2" x="320" y="450"/>
<rect x="317" y="483" width="30" height="42" stroke="#e01020" stroke-width="3"/><rect x="322" y="490" width="30" height="30" stroke="#1818e0" stroke-width="3"/><rect x="360" y="482" width="40" height="40" stroke="#4050b0" stroke-width="3"/><use href="#c2" x="404" y="480"/><use href="#s2" x="442" y="478"/>
<rect x="352" y="530" width="52" height="44" stroke="#a03080" stroke-width="3"/><rect x="404" y="530" width="42" height="44" stroke="#e01020" stroke-width="3"/><path d="M420 534v36M433 534v36" stroke="#1818e0" stroke-width="3"/><use href="#s1" x="318" y="540"/><use href="#s1" x="320" y="553"/><use href="#s2" x="440" y="535"/>
<use href="#s2" x="368" y="582"/><use href="#s1" x="405" y="590"/><use href="#s1" x="430" y="590"/><use href="#s2" x="405" y="615"/><use href="#s1" x="430" y="610"/>
<use href="#c2" x="500" y="638"/><use href="#s2" x="503" y="608"/><use href="#c1" transform="translate(448 662)"/><use href="#s1" x="450" y="648"/><use href="#s2" x="392" y="680"/><use href="#c1" transform="translate(415 697)"/>
<use href="#c2" x="578" y="692"/><use href="#c1" transform="translate(565 692)"/><use href="#s2" x="565" y="665"/><use href="#s2" x="612" y="710"/>
<use href="#c1" transform="translate(565 775)"/><use href="#s2" x="585" y="793"/><use href="#s2" x="395" y="820"/><use href="#c1" transform="translate(445 820)"/><use href="#c2" x="500" y="822"/><use href="#c1" transform="translate(520 824)"/><use href="#s1" x="542" y="828"/><use href="#s1" x="545" y="850"/>
<use href="#c1" transform="translate(462 848)"/><use href="#s2" x="435" y="864"/><use href="#s1" x="500" y="888"/><use href="#s1" x="500" y="905"/>
<use href="#s1" x="676" y="770"/><use href="#s1" x="700" y="770"/><use href="#s1" x="676" y="790"/><use href="#s1" x="700" y="790"/><use href="#s2" x="742" y="805"/>
<g transform="translate(688 828)"><rect width="95" height="42" stroke="#e01020" stroke-width="3"/><rect x="-10" y="6" width="14" height="30" stroke="#1818e0" stroke-width="3"/><path d="M14 2v38M34 2v38" stroke="#1818e0" stroke-width="3"/><rect x="44" y="0" width="50" height="42" stroke="#1818e0" stroke-width="3"/></g>
<use href="#c2" x="710" y="885"/><rect x="738" y="876" width="40" height="40" stroke="#1818e0" stroke-width="3"/><rect x="785" y="870" width="35" height="46" stroke="#e01020" stroke-width="3"/><rect x="790" y="878" width="24" height="30" stroke="#1818e0" stroke-width="3"/><use href="#s1" x="820" y="895"/><use href="#s2" x="676" y="882"/><use href="#s1" x="820" y="912"/>
<rect x="738" y="925" width="42" height="44" stroke="#a03080" stroke-width="3"/><path d="M740 940h38M740 955h38" stroke="#1818e0" stroke-width="3"/><use href="#s1" x="785" y="945"/><use href="#s1" x="800" y="940"/>
<use href="#vc" x="850" y="503"/><use href="#vc" x="853" y="658"/><use href="#vc" x="855" y="835"/>
<use href="#s2" x="826" y="515"/><use href="#s2" x="836" y="735"/><use href="#s2" x="840" y="800"/><use href="#s2" x="795" y="838"/>
<rect x="965" y="514" width="25" height="42" stroke="#a03080" stroke-width="3"/><use href="#s2" x="990" y="540"/>
<rect x="968" y="630" width="36" height="22" stroke="#a03080" stroke-width="3"/><use href="#s1" x="968" y="608"/>
<rect x="975" y="675" width="42" height="46" stroke="#3030d0" stroke-width="3"/><use href="#s1" x="928" y="690"/>
<rect x="964" y="748" width="42" height="25" stroke="#a03080" stroke-width="3"/><rect x="964" y="785" width="42" height="25" stroke="#a03080" stroke-width="3"/><use href="#s2" x="920" y="732"/><use href="#s1" x="920" y="767"/>
<rect x="982" y="847" width="40" height="44" stroke="#3030d0" stroke-width="3"/><use href="#s2" x="920" y="866"/>
<rect x="970" y="910" width="42" height="25" stroke="#a03080" stroke-width="3"/><use href="#s1" x="985" y="935"/>
<use href="#s2" x="305" y="1160"/>
</g>

<!-- tiny mark texts -->
<text x="558" y="820" textLength="24" lengthAdjust="spacingAndGlyphs" style="font:bold 6px 'Liberation Sans',sans-serif;fill:#d00">MARK3_1_2</text>
<text x="565" y="833" textLength="16" lengthAdjust="spacingAndGlyphs" style="font:bold 5px 'Liberation Sans',sans-serif;fill:#1a1ae0">MARK3_1_2</text>
<text x="1305" y="833" textLength="17" lengthAdjust="spacingAndGlyphs" style="font:bold 5px 'Liberation Sans',sans-serif;fill:#1a1ae0">MARK3_1_2</text>
<text x="1302" y="846" textLength="24" lengthAdjust="spacingAndGlyphs" style="font:bold 6px 'Liberation Sans',sans-serif;fill:#d00">MARK3_1_2</text>

<!-- cursor -->
<g transform="translate(539 926)" fill="none" stroke="#fff"><path d="M-11 0h22M0-11v22M-8-8l16 16M-8 8l16-16"/><circle r="7"/><circle r="3.500"/></g>

<!-- zoom lines -->
<g stroke="#fff" fill="none" stroke-width="1.200">
<rect x="548" y="207" width="43" height="25" stroke-width="1.300"/>
<path d="M548 207L129 347M548 232L128 587M574 232L497 347M591 232L497 587"/>
<path d="M817 244L945 234M841 244L945 243M841 263L945 328M817 263L945 708"/>
</g>
<text x="561" y="223" textLength="18" lengthAdjust="spacingAndGlyphs" style="font:bold 5px 'Liberation Sans',sans-serif;fill:#f00">MARK3_1_2</text>
<rect x="563" y="211" width="13" height="2" fill="#1a1ae0"/>

<!-- POPVIEW 1 -->
<g>
<path d="M117 315h422q4 0 4 4v304q0 4-4 4H117q-3 0-3-4V319q0-4 3-4z" fill="url(#g1)" stroke="#8a9090"/>
<rect x="114" y="622" width="29" height="5" fill="#70d8d0"/>
<rect x="114" y="343" width="6" height="280" fill="#7adcd4"/>
<rect x="538" y="345" width="5" height="280" fill="#2a2c2e"/>
<rect x="538" y="380" width="5" height="22" fill="#9a9a9a" opacity=".7"/>
<rect x="490" y="314" width="47" height="20" rx="3" fill="#1a1c1e" stroke="#6a6e70"/>
<text x="509" y="329" style="font:bold 14px 'Liberation Sans',sans-serif;fill:#fff">X</text>
<rect x="122" y="323" width="15" height="13" fill="#f4f0d0" stroke="#333"/><rect x="122" y="323" width="15" height="3" fill="#1a2a70"/>
<path d="M126 328l7 6m0-6l-7 6" stroke="#a8a020" stroke-width="2"/>
<text class="t" x="142" y="333">Popview - 1</text>
<rect x="119" y="342" width="419" height="280" fill="#3f6f62"/>
<rect x="120" y="344" width="417" height="277" fill="#52ccab"/>
<rect x="124" y="347" width="372" height="240" fill="#000"/>
<rect x="122" y="345" width="2" height="244" fill="#3f6f62"/>
<rect x="496" y="346" width="3" height="244" fill="#b0e8d8"/>
<rect x="122" y="587" width="377" height="3" fill="#b0e8d8"/>
<text x="267" y="396" textLength="136" lengthAdjust="spacingAndGlyphs" style="font:25px 'Liberation Sans',sans-serif;fill:#0a18e0;stroke:#0a18e0;stroke-width:.9">MARK3_1_2</text>
<text x="218" y="514" textLength="205" lengthAdjust="spacingAndGlyphs" style="font:bold 38px 'Liberation Sans',sans-serif;fill:#f00">MARK3_1_2</text>
<g transform="translate(499 345) scale(.92)">
<use href="#bt" y="0"/><use href="#pp" y="0"/>
<use href="#bt" y="38"/><use href="#up" y="38"/>
<use href="#bt" y="76"/><use href="#dn" y="76"/>
<use href="#bt" y="114"/><use href="#lf" y="114"/>
<use href="#bt" y="152"/><use href="#rg" y="152"/>
<use href="#bt" y="190"/><use href="#fi" y="190"/>
<use href="#bt" y="228"/><use href="#fo" y="228"/>
</g>
<rect x="122" y="592" width="413" height="27" fill="#9ddcdc"/>
<path d="M122 592h413M122 592v27" stroke="#d0f8f4" stroke-width="2"/>
<path d="M535 592v27H122" stroke="#4f8080" stroke-width="2" fill="none"/>
<text class="c" x="328" y="610">Close</text>
</g>

<!-- POPVIEW 2 -->
<g>
<path d="M939 200h628q3 0 3 3v536q0 3-3 3H939q-3 0-3-3V203q0-3 3-3z" fill="url(#g2)" stroke="#999"/>
<rect x="936" y="227" width="4" height="513" fill="#2a2c2e"/>
<rect x="936" y="228" width="4" height="100" fill="#a0a4a4"/>
<rect x="1565" y="228" width="5" height="512" fill="#1c1e20"/>
<rect x="1565" y="228" width="5" height="125" fill="#aaa"/>
<rect x="1310" y="206" width="14" height="7" fill="#0a1a60" opacity=".8"/>
<rect x="1306" y="221" width="22" height="4" fill="#501010" opacity=".8"/>
<rect x="1518" y="199" width="47" height="19" rx="3" fill="url(#gr)" stroke="#5a1408"/>
<text x="1536" y="213" style="font:bold 14px 'Liberation Sans',sans-serif;fill:#fff">X</text>
<rect x="942" y="206" width="14" height="13" fill="#f4f0d0" stroke="#333"/><rect x="942" y="206" width="14" height="3" fill="#1a2a70"/>
<path d="M945 211l8 6m0-6l-8 6" stroke="#a8a020" stroke-width="2"/>
<text class="t" x="963" y="218" style="fill:#1a1a1a">Popview - 2</text>
<rect x="940" y="227" width="625" height="511" fill="#3f6f62"/>
<rect x="942" y="230" width="621" height="506" fill="#52ccab"/>
<rect x="945" y="231" width="579" height="473" fill="#000"/>
<rect x="943" y="229" width="2" height="476" fill="#3f6f62"/>
<rect x="1524" y="230" width="3" height="476" fill="#b0e8d8"/>
<rect x="943" y="704" width="584" height="3" fill="#b0e8d8"/>
<path d="M945 333h175q4 0 4 4v363q0 4-4 4H945v-16h161V350H945z" fill="#f00"/>
<rect x="945" y="350" width="19" height="5" fill="#f00"/>
<rect x="945" y="684" width="19" height="5" fill="#f00"/>
<rect x="963" y="381" width="112.500" height="277" rx="1" fill="none" stroke="#0a18f0" stroke-width="9"/>
<rect x="945" y="511" width="14" height="16.500" fill="#f00"/><rect x="959" y="511" width="5" height="16.500" fill="#ff20ff"/>
<g style="font:bold 122px 'Liberation Sans',sans-serif;fill:#ff18ff;stroke:#f00;stroke-width:4.500">
<text transform="translate(1138 453) rotate(90)" textLength="180" lengthAdjust="spacingAndGlyphs">C52</text>
<text transform="translate(1246 456) rotate(90)" textLength="177" lengthAdjust="spacingAndGlyphs">C51</text>
<text transform="translate(1354 456) rotate(90)" textLength="180" lengthAdjust="spacingAndGlyphs">C50</text>
</g>
<g transform="translate(1528 230) scale(.92)">
<use href="#bt" y="0"/><use href="#pp" y="0"/>
<use href="#bt" y="38"/><use href="#up" y="38"/>
<use href="#bt" y="76"/><use href="#dn" y="76"/>
<use href="#bt" y="114"/><use href="#lf" y="114"/>
<use href="#bt" y="152"/><use href="#rg" y="152"/>
<use href="#bt" y="190"/><use href="#fi" y="190"/>
<use href="#bt" y="228"/><use href="#fo" y="228"/>
</g>
<rect x="945" y="711" width="615" height="23" fill="#9ddcdc"/>
<path d="M945 711h615M945 711v23" stroke="#d0f8f4" stroke-width="2"/>
<path d="M1560 711v23H945" stroke="#4f8080" stroke-width="2" fill="none"/>
<text class="c" x="1252" y="727">Close</text>
</g>
</svg>
</body></html>
